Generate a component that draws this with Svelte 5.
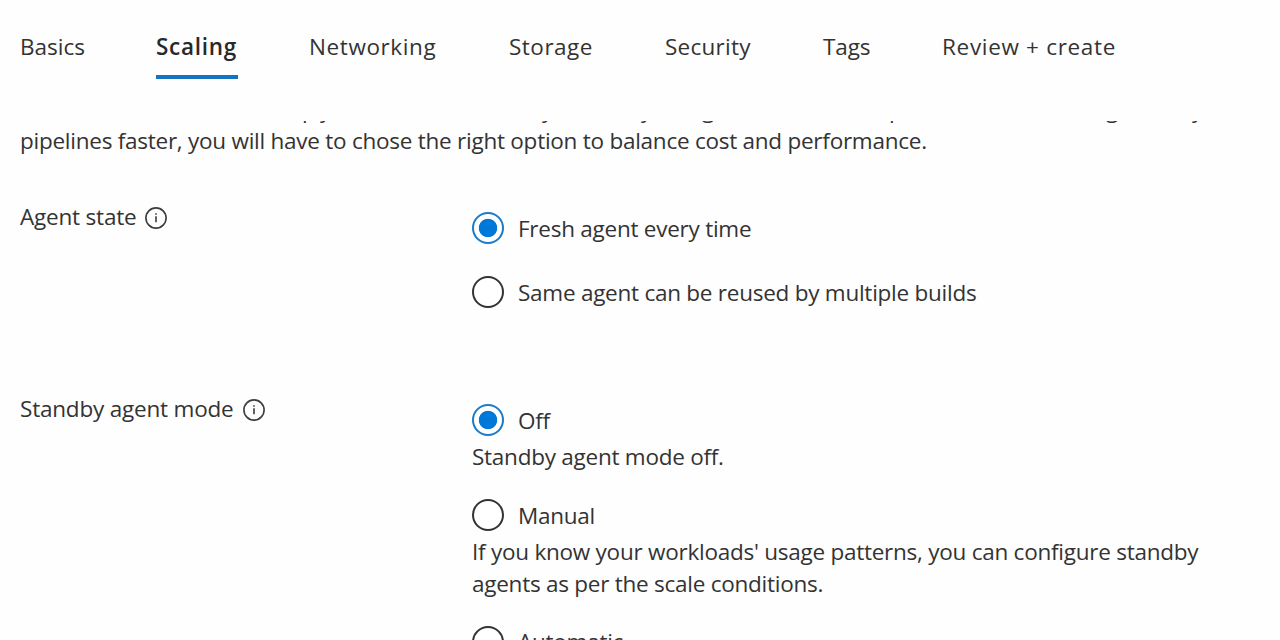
<script>
    let activeTab = "Scaling";
    let agentState = "fresh";
    let standbyMode = "off";

    const tabs = [
        { name: "Basics", width: 64, spacing: 0 },
        { name: "Scaling", width: 82, spacing: 0.7 },
        { name: "Networking", width: 128, spacing: 0.6 },
        { name: "Storage", width: 84, spacing: 0.5 },
        { name: "Security", width: 86, spacing: 0.25 },
        { name: "Tags", width: 47, spacing: -0.1 },
        { name: "Review + create", width: 174, spacing: 0.68 },
    ];

    // The scrolled line above the visible paragraph, only its descenders show
    const scrolledLine = [
        { text: "Your choice decides sim", width: 282 },
        { text: "p", width: 13 },
        { text: "l", width: 5 },
        { text: "y how often costs var", width: 222 },
        { text: "y and so", width: 99 },
        { text: "y a sin", width: 61 },
        { text: "gle build is com", width: 187 },
        { text: "pleted. To make all", width: 217 },
        { text: "get read", width: 86 },
        { text: "y", width: 20 },
    ];

    const stateOptions = [
        { id: "fresh", label: "Fresh agent every time" },
        { id: "same", label: "Same agent can be reused by multiple builds" },
    ];

    const standbyOptions = [
        { id: "off", label: "Off", hint: "Standby agent mode off." },
        {
            id: "manual",
            label: "Manual",
            hint: "If you know your workloads' usage patterns, you can configure standby agents as per the scale conditions.",
        },
        { id: "automatic", label: "Automatic", hint: "" },
    ];
</script>

<div class="page">
    <div class="tabs">
        {#each tabs as tab}
            <button
                class="tab"
                class:active={tab.name === activeTab}
                style="width: {tab.width}px; letter-spacing: {tab.spacing}px"
                on:click={() => (activeTab = tab.name)}>{tab.name}</button>
        {/each}
    </div>

    <div class="content">
        <div class="intro">
            <div class="scrolled">
                {#each scrolledLine as part}<span style="width: {part.width}px">{part.text}</span>{/each}
            </div>
            <p>pipelines faster, you will have to chose the right option to balance cost and performance.</p>
        </div>

        <div class="row state">
            <div class="name">
                <span>Agent state</span>
                <svg class="info" viewBox="0 0 22 22">
                    <circle cx="11" cy="11" r="10.1" />
                    <path d="M11 9.2V15.3M11 6.2V7.7" />
                </svg>
            </div>
            <div class="options">
                {#each stateOptions as option}
                    <label>
                        <input type="radio" value={option.id} bind:group={agentState} />
                        <span>{option.label}</span>
                    </label>
                {/each}
            </div>
        </div>

        <div class="row standby">
            <div class="name">
                <span>Standby agent mode</span>
                <svg class="info" viewBox="0 0 22 22">
                    <circle cx="11" cy="11" r="10.1" />
                    <path d="M11 9.2V15.3M11 6.2V7.7" />
                </svg>
            </div>
            <div class="options">
                {#each standbyOptions as option}
                    <div class="option">
                        <label>
                            <input type="radio" value={option.id} bind:group={standbyMode} />
                            <span>{option.label}</span>
                        </label>
                        {#if option.hint}
                            <p>{option.hint}</p>
                        {/if}
                    </div>
                {/each}
            </div>
        </div>
    </div>
</div>

<style>
    :global(body) {
        margin: 0;
        background: #fefefe;
    }

    .page {
        height: 640px;
        overflow: hidden;
        font-family: "Segoe UI", "Open Sans", sans-serif;
        font-size: 22.5px;
        line-height: 31.5px;
        letter-spacing: -0.25px;
        color: #333;
    }

    .tabs {
        display: flex;
        gap: 72px;
        height: 121px;
        padding: 31px 20px 0;
        box-sizing: border-box;
    }

    .tab {
        height: 48px;
        padding: 0 0 13px;
        border: none;
        border-bottom: 4px solid transparent;
        background: none;
        font: inherit;
        color: inherit;
        text-align: left;
        white-space: nowrap;
        box-sizing: border-box;
        cursor: pointer;
    }

    .tab.active {
        margin-right: -1px;
        padding-bottom: 12px;
        border-bottom-color: #1474bf;
        font-weight: 600;
        color: #292929;
    }

    .content {
        padding: 0 20px;
    }

    .intro {
        display: flex;
        flex-direction: column;
        justify-content: flex-end;
        height: 36px;
        overflow: hidden;
    }

    .intro p {
        margin-top: -1px;
        padding-bottom: 1px;
    }

    .scrolled {
        display: flex;
        flex-shrink: 0;
        white-space: pre;
    }

    p {
        margin: 0;
    }

    .row {
        display: grid;
        grid-template-columns: 452px 740px;
    }

    .state {
        padding-top: 44px;
        height: 148px;
    }

    .standby {
        padding-top: 44px;
    }

    .name {
        display: flex;
        align-items: flex-start;
        gap: 9px;
        letter-spacing: -0.2px;
    }

    .info {
        width: 22px;
        height: 22px;
        margin-top: 6px;
        fill: none;
        stroke: #3c3c3c;
        stroke-width: 1.6;
    }

    .options {
        padding-top: 11px;
    }

    label {
        display: flex;
        align-items: center;
        gap: 14px;
        height: 32px;
    }

    .state label {
        margin-bottom: 32px;
    }

    label span {
        padding-top: 1px;
    }

    input {
        appearance: none;
        width: 32px;
        height: 32px;
        margin: 0;
        border: 2px solid #333;
        border-radius: 50%;
        background: #fff;
        flex-shrink: 0;
    }

    input:checked {
        border-color: #1a7ac8;
        background: radial-gradient(circle, #0078d7 8.8px, #fff 9.6px);
    }

    .option {
        margin-bottom: 26.5px;
    }

    .option p {
        padding-top: 5px;
    }
</style>
